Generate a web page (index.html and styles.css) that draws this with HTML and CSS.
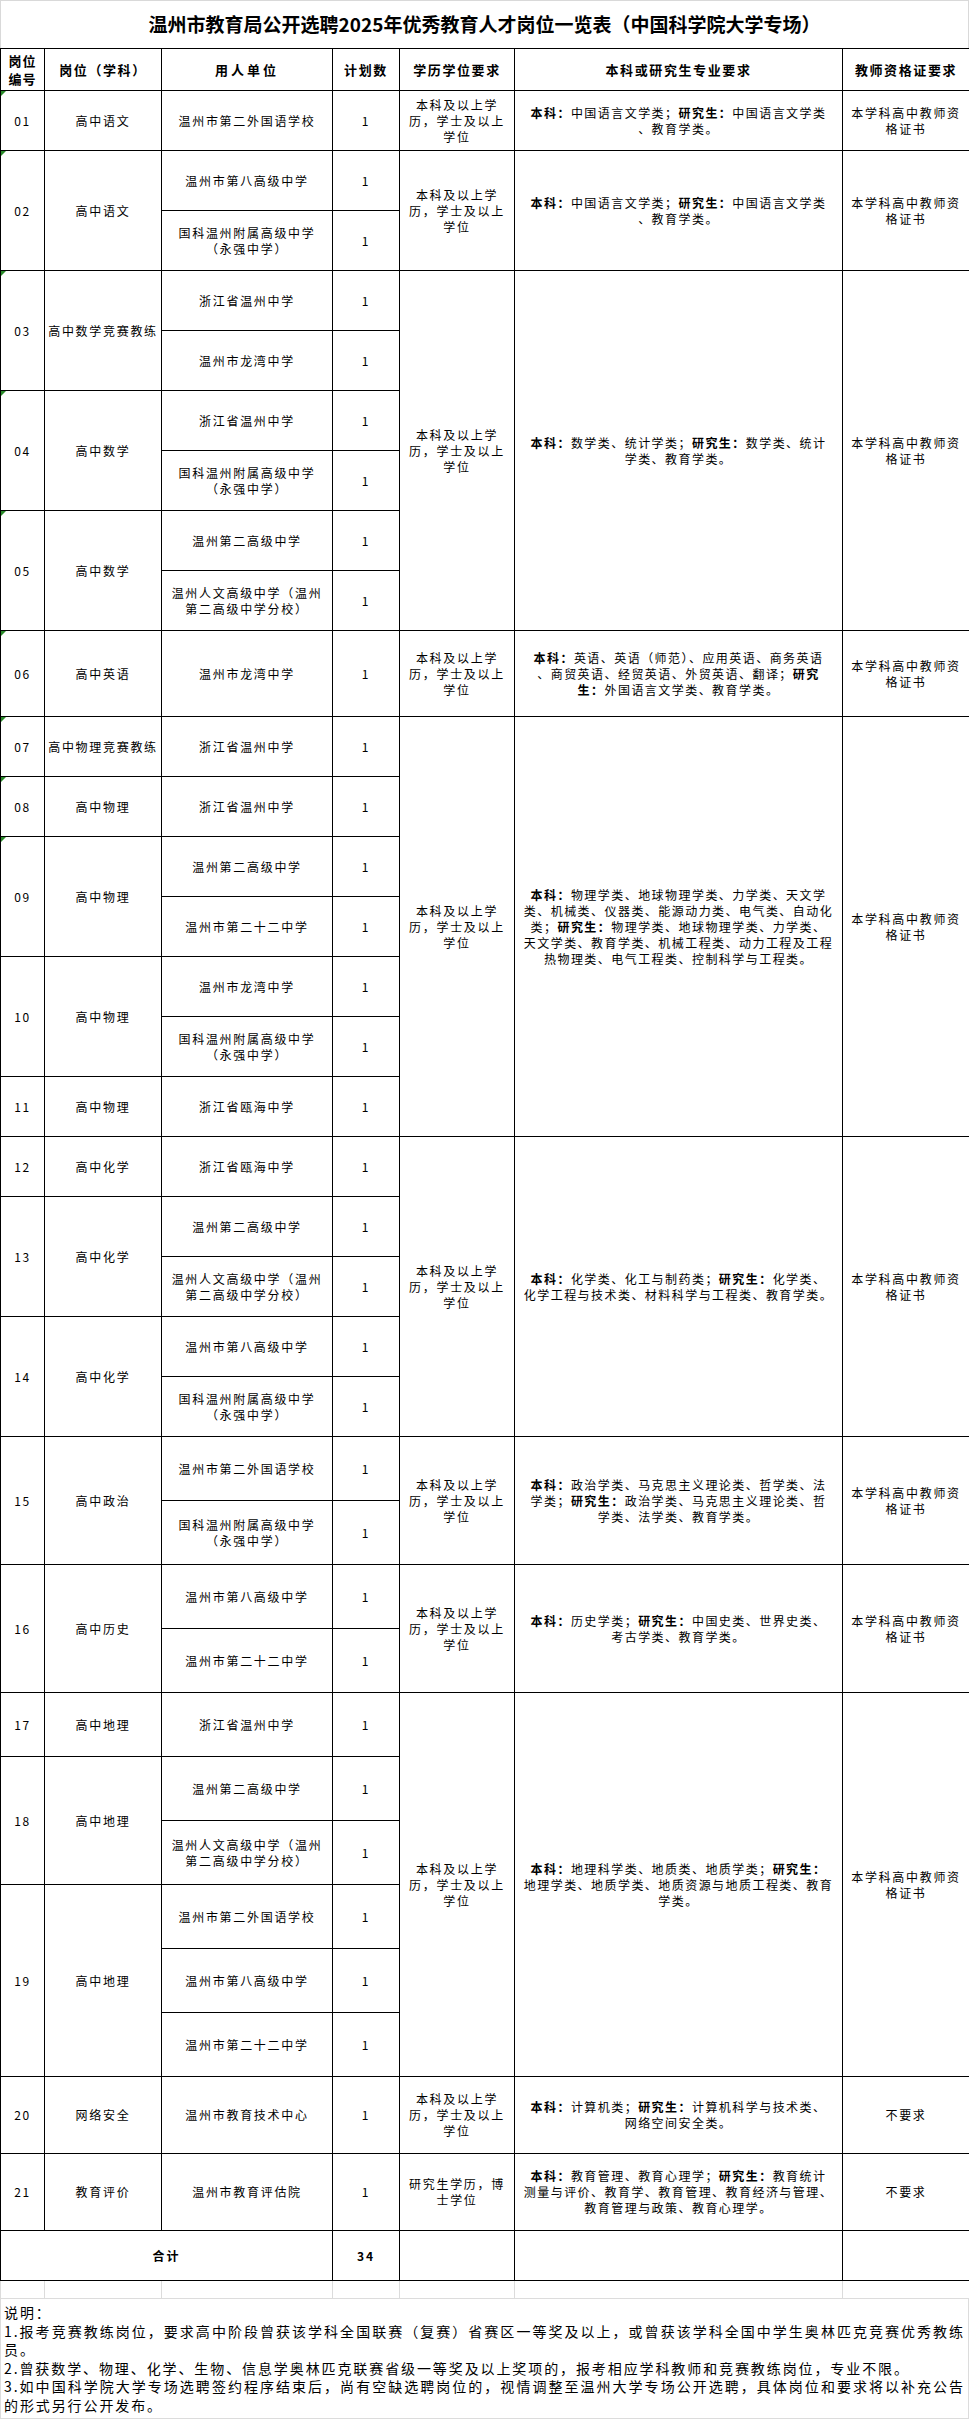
FILE: index.html
```html
<!DOCTYPE html>
<html lang="zh-CN">
<head>
<meta charset="utf-8">
<title>温州市教育局公开选聘2025年优秀教育人才岗位一览表（中国科学院大学专场）</title>
<link rel="stylesheet" href="styles.css">
</head>
<body>
<div class="page">
  <div class="title">温州市教育局公开选聘2025年优秀教育人才岗位一览表（中国科学院大学专场）</div>
  <table class="jobs">
    <colgroup>
      <col class="c1"><col class="c2"><col class="c3"><col class="c4"><col class="c5"><col class="c6"><col class="c7">
    </colgroup>
    <thead>
      <tr class="h-head">
        <th class="th-id">岗位<br>编号</th>
        <th>岗位（学科）</th>
        <th class="wide">用人单位</th>
        <th>计划数</th>
        <th>学历学位要求</th>
        <th>本科或研究生专业要求</th>
        <th>教师资格证要求</th>
      </tr>
    </thead>
    <tbody>
      <tr class="h60">
        <td class="flag">01</td><td>高中语文</td><td>温州市第二外国语学校</td><td>1</td>
        <td>本科及以上学<br>历，学士及以上<br>学位</td>
        <td class="major"><b>本科：</b>中国语言文学类；<b>研究生：</b>中国语言文学类<br>、教育学类。</td>
        <td>本学科高中教师资<br>格证书</td>
      </tr>

      <tr class="h60">
        <td class="flag" rowspan="2">02</td><td rowspan="2">高中语文</td><td>温州市第八高级中学</td><td>1</td>
        <td rowspan="2">本科及以上学<br>历，学士及以上<br>学位</td>
        <td class="major" rowspan="2"><b>本科：</b>中国语言文学类；<b>研究生：</b>中国语言文学类<br>、教育学类。</td>
        <td rowspan="2">本学科高中教师资<br>格证书</td>
      </tr>
      <tr class="h60"><td>国科温州附属高级中学<br>（永强中学）</td><td>1</td></tr>

      <tr class="h60">
        <td class="flag" rowspan="2">03</td><td rowspan="2">高中数学竞赛教练</td><td>浙江省温州中学</td><td>1</td>
        <td rowspan="6">本科及以上学<br>历，学士及以上<br>学位</td>
        <td class="major" rowspan="6"><b>本科：</b>数学类、统计学类；<b>研究生：</b>数学类、统计<br>学类、教育学类。</td>
        <td rowspan="6">本学科高中教师资<br>格证书</td>
      </tr>
      <tr class="h60"><td>温州市龙湾中学</td><td>1</td></tr>
      <tr class="h60"><td class="flag" rowspan="2">04</td><td rowspan="2">高中数学</td><td>浙江省温州中学</td><td>1</td></tr>
      <tr class="h60"><td>国科温州附属高级中学<br>（永强中学）</td><td>1</td></tr>
      <tr class="h60"><td class="flag" rowspan="2">05</td><td rowspan="2">高中数学</td><td>温州第二高级中学</td><td>1</td></tr>
      <tr class="h60"><td>温州人文高级中学（温州<br>第二高级中学分校）</td><td>1</td></tr>

      <tr class="h86">
        <td class="flag">06</td><td>高中英语</td><td>温州市龙湾中学</td><td>1</td>
        <td>本科及以上学<br>历，学士及以上<br>学位</td>
        <td class="major"><b>本科：</b>英语、英语（师范）、应用英语、商务英语<br>、商贸英语、经贸英语、外贸英语、翻译；<b>研究</b><br><b>生：</b>外国语言文学类、教育学类。</td>
        <td>本学科高中教师资<br>格证书</td>
      </tr>

      <tr class="h60">
        <td class="flag">07</td><td>高中物理竞赛教练</td><td>浙江省温州中学</td><td>1</td>
        <td rowspan="7">本科及以上学<br>历，学士及以上<br>学位</td>
        <td class="major" rowspan="7"><b>本科：</b>物理学类、地球物理学类、力学类、天文学<br>类、机械类、仪器类、能源动力类、电气类、自动化<br>类；<b>研究生：</b>物理学类、地球物理学类、力学类、<br>天文学类、教育学类、机械工程类、动力工程及工程<br>热物理类、电气工程类、控制科学与工程类。</td>
        <td rowspan="7">本学科高中教师资<br>格证书</td>
      </tr>
      <tr class="h60"><td class="flag">08</td><td>高中物理</td><td>浙江省温州中学</td><td>1</td></tr>
      <tr class="h60"><td class="flag" rowspan="2">09</td><td rowspan="2">高中物理</td><td>温州第二高级中学</td><td>1</td></tr>
      <tr class="h60"><td>温州市第二十二中学</td><td>1</td></tr>
      <tr class="h60"><td rowspan="2">10</td><td rowspan="2">高中物理</td><td>温州市龙湾中学</td><td>1</td></tr>
      <tr class="h60"><td>国科温州附属高级中学<br>（永强中学）</td><td>1</td></tr>
      <tr class="h60"><td>11</td><td>高中物理</td><td>浙江省瓯海中学</td><td>1</td></tr>

      <tr class="h60">
        <td>12</td><td>高中化学</td><td>浙江省瓯海中学</td><td>1</td>
        <td rowspan="5">本科及以上学<br>历，学士及以上<br>学位</td>
        <td class="major" rowspan="5"><b>本科：</b>化学类、化工与制药类；<b>研究生：</b>化学类、<br>化学工程与技术类、材料科学与工程类、教育学类。</td>
        <td rowspan="5">本学科高中教师资<br>格证书</td>
      </tr>
      <tr class="h60"><td rowspan="2">13</td><td rowspan="2">高中化学</td><td>温州第二高级中学</td><td>1</td></tr>
      <tr class="h60"><td>温州人文高级中学（温州<br>第二高级中学分校）</td><td>1</td></tr>
      <tr class="h60"><td rowspan="2">14</td><td rowspan="2">高中化学</td><td>温州市第八高级中学</td><td>1</td></tr>
      <tr class="h60"><td>国科温州附属高级中学<br>（永强中学）</td><td>1</td></tr>

      <tr class="h64">
        <td rowspan="2">15</td><td rowspan="2">高中政治</td><td>温州市第二外国语学校</td><td>1</td>
        <td rowspan="2">本科及以上学<br>历，学士及以上<br>学位</td>
        <td class="major" rowspan="2"><b>本科：</b>政治学类、马克思主义理论类、哲学类、法<br>学类；<b>研究生：</b>政治学类、马克思主义理论类、哲<br>学类、法学类、教育学类。</td>
        <td rowspan="2">本学科高中教师资<br>格证书</td>
      </tr>
      <tr class="h64"><td>国科温州附属高级中学<br>（永强中学）</td><td>1</td></tr>

      <tr class="h64">
        <td rowspan="2">16</td><td rowspan="2">高中历史</td><td>温州市第八高级中学</td><td>1</td>
        <td rowspan="2">本科及以上学<br>历，学士及以上<br>学位</td>
        <td class="major" rowspan="2"><b>本科：</b>历史学类；<b>研究生：</b>中国史类、世界史类、<br>考古学类、教育学类。</td>
        <td rowspan="2">本学科高中教师资<br>格证书</td>
      </tr>
      <tr class="h64"><td>温州市第二十二中学</td><td>1</td></tr>

      <tr class="h64">
        <td>17</td><td>高中地理</td><td>浙江省温州中学</td><td>1</td>
        <td rowspan="6">本科及以上学<br>历，学士及以上<br>学位</td>
        <td class="major" rowspan="6"><b>本科：</b>地理科学类、地质类、地质学类；<b>研究生：</b><br>地理学类、地质学类、地质资源与地质工程类、教育<br>学类。</td>
        <td rowspan="6">本学科高中教师资<br>格证书</td>
      </tr>
      <tr class="h64"><td rowspan="2">18</td><td rowspan="2">高中地理</td><td>温州第二高级中学</td><td>1</td></tr>
      <tr class="h64"><td>温州人文高级中学（温州<br>第二高级中学分校）</td><td>1</td></tr>
      <tr class="h64"><td rowspan="3">19</td><td rowspan="3">高中地理</td><td>温州市第二外国语学校</td><td>1</td></tr>
      <tr class="h64"><td>温州市第八高级中学</td><td>1</td></tr>
      <tr class="h64"><td>温州市第二十二中学</td><td>1</td></tr>

      <tr class="h77">
        <td>20</td><td>网络安全</td><td>温州市教育技术中心</td><td>1</td>
        <td>本科及以上学<br>历，学士及以上<br>学位</td>
        <td class="major"><b>本科：</b>计算机类；<b>研究生：</b>计算机科学与技术类、<br>网络空间安全类。</td>
        <td>不要求</td>
      </tr>
      <tr class="h77">
        <td>21</td><td>教育评价</td><td>温州市教育评估院</td><td>1</td>
        <td>研究生学历，博<br>士学位</td>
        <td class="major"><b>本科：</b>教育管理、教育心理学；<b>研究生：</b>教育统计<br>测量与评价、教育学、教育管理、教育经济与管理、<br>教育管理与政策、教育心理学。</td>
        <td>不要求</td>
      </tr>

      <tr class="h50 total">
        <td colspan="3">合计</td><td>34</td><td></td><td></td><td></td>
      </tr>
      <tr class="gap">
        <td></td><td></td><td></td><td></td><td></td><td></td><td></td>
      </tr>
    </tbody>
  </table>
  <div class="notes">
    <div>说明：</div>
    <div class="j">1.报考竞赛教练岗位，要求高中阶段曾获该学科全国联赛（复赛）省赛区一等奖及以上，或曾获该学科全国中学生奥林匹克竞赛优秀教练</div>
    <div>员。</div>
    <div>2.曾获数学、物理、化学、生物、信息学奥林匹克联赛省级一等奖及以上奖项的，报考相应学科教师和竞赛教练岗位，专业不限。</div>
    <div class="j">3.如中国科学院大学专场选聘签约程序结束后，尚有空缺选聘岗位的，视情调整至温州大学专场公开选聘，具体岗位和要求将以补充公告</div>
    <div>的形式另行公开发布。</div>
  </div>
</div>
</body>
</html>
```
FILE: styles.css
```css
html, body {
  margin: 0;
  padding: 0;
  background: #fff;
}
body {
  font-family: "Noto Sans CJK SC", "Noto Sans", sans-serif;
  color: #000;
}
.page {
  width: 969px;
}
.title {
  height: 48px;
  box-sizing: border-box;
  border: 1px solid #d9d9d9;
  border-bottom: none;
  display: flex;
  align-items: center;
  justify-content: center;
  font-size: 19px;
  font-weight: 700;
  letter-spacing: 0;
  padding-bottom: 2px;
}
.jobs {
  border-collapse: collapse;
  table-layout: fixed;
  width: 969px;
}
.c1 { width: 44px; }
.c2 { width: 117px; }
.c3 { width: 171px; }
.c4 { width: 67px; }
.c5 { width: 115px; }
.c6 { width: 328px; }
.c7 { width: 127px; }

.jobs th,
.jobs td {
  border: 1px solid #000;
  padding: 0 1px;
  text-align: center;
  vertical-align: middle;
  font-size: 12px;
  letter-spacing: 1.7px;
  line-height: 16px;
  white-space: nowrap;
  font-weight: 400;
}
.jobs th {
  font-size: 13px;
  font-weight: 700;
  letter-spacing: 1.6px;
}
.jobs th.wide {
  letter-spacing: 3px;
}
.jobs th.th-id {
  font-size: 13px;
  letter-spacing: 1px;
  line-height: 18px;
}
.jobs td.major {
  letter-spacing: 1.45px;
  padding: 0;
}
.jobs td b {
  font-weight: 700;
}
.h-head { height: 42px; }
.h60 { height: 60px; }
.h64 { height: 64px; }
.h77 { height: 77px; }
.h86 { height: 86px; }
.h50 { height: 50px; }
.total td {
  font-weight: 700;
  letter-spacing: 2px;
}
.gap { height: 18px; }
.jobs .gap td {
  border: 1px solid #dcdcdc;
  border-top-color: #000;
}
.jobs td.flag {
  position: relative;
}
.jobs td.flag::before {
  content: "";
  position: absolute;
  left: 0;
  top: 0;
  border-top: 5px solid #2a8a2a;
  border-right: 5px solid transparent;
}
.notes {
  box-sizing: border-box;
  width: 969px;
  border: 1px solid #dcdcdc;
  border-top: none;
  padding: 4px 3px 3px 3px;
  font-size: 14px;
  letter-spacing: 1.9px;
  line-height: 18.6px;
}
.notes .j {
  text-align: justify;
  text-align-last: justify;
}
```
